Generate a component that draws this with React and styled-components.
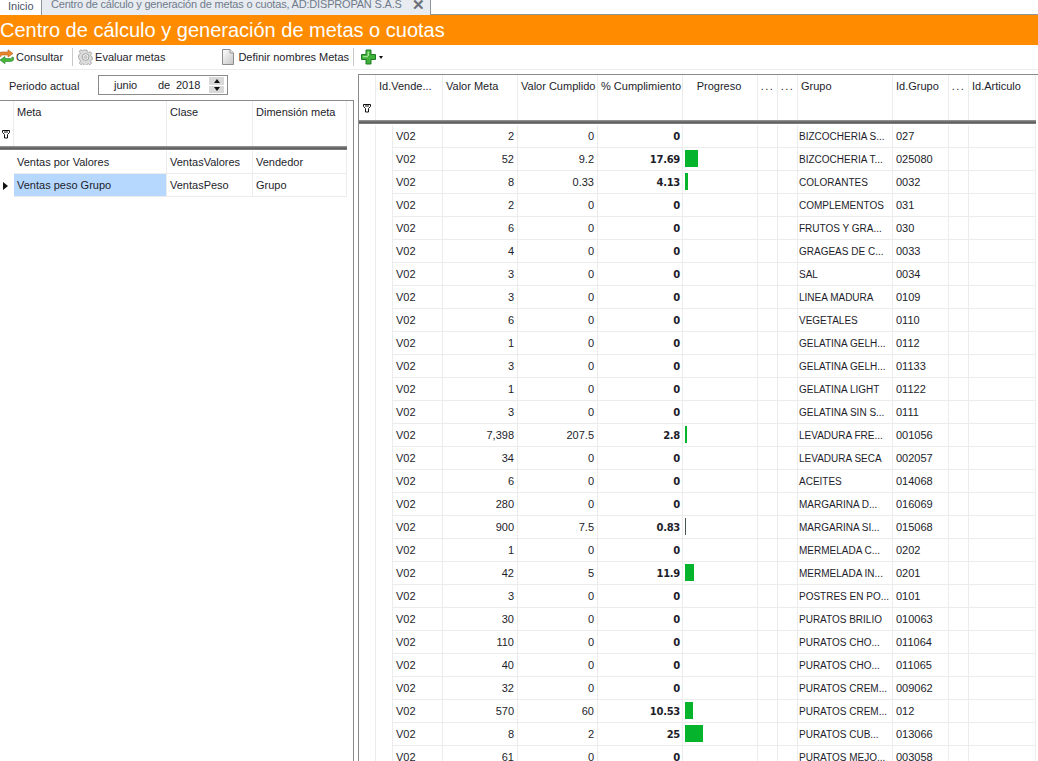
import React from "react";
import styled, { createGlobalStyle } from "styled-components";

const rows = [
	["2", "0", "0", "BIZCOCHERIA S...", "027"],
	["52", "9.2", "17.69", "BIZCOCHERIA T...", "025080"],
	["8", "0.33", "4.13", "COLORANTES", "0032"],
	["2", "0", "0", "COMPLEMENTOS", "031"],
	["6", "0", "0", "FRUTOS Y GRA...", "030"],
	["4", "0", "0", "GRAGEAS DE C...", "0033"],
	["3", "0", "0", "SAL", "0034"],
	["3", "0", "0", "LINEA MADURA", "0109"],
	["6", "0", "0", "VEGETALES", "0110"],
	["1", "0", "0", "GELATINA GELH...", "0112"],
	["3", "0", "0", "GELATINA GELH...", "01133"],
	["1", "0", "0", "GELATINA LIGHT", "01122"],
	["3", "0", "0", "GELATINA SIN S...", "0111"],
	["7,398", "207.5", "2.8", "LEVADURA FRE...", "001056"],
	["34", "0", "0", "LEVADURA SECA", "002057"],
	["6", "0", "0", "ACEITES", "014068"],
	["280", "0", "0", "MARGARINA D...", "016069"],
	["900", "7.5", "0.83", "MARGARINA SI...", "015068"],
	["1", "0", "0", "MERMELADA C...", "0202"],
	["42", "5", "11.9", "MERMELADA IN...", "0201"],
	["3", "0", "0", "POSTRES EN PO...", "0101"],
	["30", "0", "0", "PURATOS BRILIO", "010063"],
	["110", "0", "0", "PURATOS CHO...", "011064"],
	["40", "0", "0", "PURATOS CHO...", "011065"],
	["32", "0", "0", "PURATOS CREM...", "009062"],
	["570", "60", "10.53", "PURATOS CREM...", "012"],
	["8", "2", "25", "PURATOS CUB...", "013066"],
	["61", "0", "0", "PURATOS MEJO...", "003058"],
];

const metaRows = [
	{ meta: "Ventas por Valores", clase: "VentasValores", dim: "Vendedor" },
	{ meta: "Ventas peso Grupo", clase: "VentasPeso", dim: "Grupo", selected: true },
];

const goalCols = "17px 17px 50px 75px 80px 85px 75px 20px 20px 95px 56px 20px 67px";
const metaCols = "14px 153px 86px 94px";

const RefreshIcon = () => (
	<svg width="15" height="16" viewBox="0 0 15 16">
		<path d="M0 7V5.500C0 3.800 1.200 3 3 3h6V.8L14 4.500 9 8V6H3.500C2.500 6 2 6.400 2 7.500z" fill="#e8862e" stroke="#b5601a" strokeWidth=".6" />
		<path d="M14.500 8.500V10c0 1.700-1.200 2.500-3 2.500H6v2.200L1 11l5-3.500v2h5.500c1 0 1.500-.4 1.500-1.500z" fill="#45b83c" stroke="#26822a" strokeWidth=".6" />
	</svg>
);

const GearIcon = () => (
	<svg width="15" height="16" viewBox="0 0 15 16">
		<path
			d="M6 .8h3l.4 2 1.500.7 1.800-1 1.600 2-1.300 1.500.3 1.600 1.600.9v2.600l-1.600.7-.4 1.600 1.200 1.600-1.800 1.800-1.700-1-1.500.6-.4 1.900H6l-.4-1.900-1.500-.6-1.700 1-1.800-1.800 1.200-1.600-.4-1.600L-.2 9.100V6.500l1.600-.9.3-1.600L.4 2.500l1.600-2 1.800 1 1.500-.7z"
			transform="translate(.7 .3) scale(.92)"
			fill="#dcdcdc"
			stroke="#9a9a9a"
			strokeWidth=".8"
		/>
		<circle cx="7.600" cy="8" r="3.400" fill="#efefef" stroke="#a5a5a5" />
		<circle cx="7.600" cy="8" r="1.500" fill="#cfcfcf" stroke="#b0b0b0" strokeWidth=".6" />
	</svg>
);

const DocIcon = () => (
	<svg width="12" height="16" viewBox="0 0 12 16">
		<defs>
			<linearGradient id="docFill" x1="0" y1="0" x2="1" y2="1">
				<stop offset="0" stopColor="#fff" />
				<stop offset="1" stopColor="#c4c4c4" />
			</linearGradient>
		</defs>
		<path d="M.5.5h7.500l3.500 3.500v11.500H.5z" fill="url(#docFill)" stroke="#8c8c8c" />
		<path d="M8 .5V4h3.500" fill="#e8e8e8" stroke="#9c9c9c" />
	</svg>
);

const PlusIcon = () => (
	<svg width="15" height="16" viewBox="0 0 15 16">
		<path d="M5 1h5v4.500h4.500v5H10V15H5v-4.500H.5v-5H5z" fill="#3fb03a" stroke="#1f7a25" />
		<path d="M6.500 2.500h1.500v4.500H6.500zM2 7h5v1.200H2z" fill="#9fe28f" />
	</svg>
);

const FilterIcon = () => (
	<svg width="9" height="9" viewBox="0 0 9 9">
		<path d="M.5.5h7v2L5.500 4.500V8h-3V4.500L.5 2.500z" fill="#fff" stroke="#111" />
		<path d="M2 2h4" stroke="#111" />
	</svg>
);

const GlobalStyle = createGlobalStyle`
	html, body {
		margin: 0;
		height: 100%;
		background: #fff;
		overflow: hidden;
	}
	#root {
		height: 100%;
	}
`;

const Page = styled.div`
	display: flex;
	flex-direction: column;
	height: 761px;
	overflow: hidden;
	font-family: "Liberation Sans", Arial, sans-serif;
	font-size: 11px;
	color: #1d1d2b;
`;

const TabBar = styled.div`
	display: flex;
	height: 15px;
	flex: none;
	overflow: hidden;
`;

const HomeTab = styled.div`
	width: 41px;
	padding-left: 8px;
	box-sizing: border-box;
	line-height: 12px;
	color: #4a5566;
`;

const OpenTab = styled.div`
	display: flex;
	justify-content: space-between;
	width: 390px;
	box-sizing: border-box;
	padding: 0 5px 0 9px;
	background: #e8ebf0;
	border-left: 1px solid #8f959c;
	border-right: 1px solid #8f959c;
	line-height: 9px;
	letter-spacing: -0.19px;
	white-space: nowrap;
	color: #6f7b8b;
`;

const TabClose = styled.span`
	font-size: 15px;
	font-weight: bold;
	line-height: 9px;
	color: #6b7078;
`;

const TabRest = styled.div`
	flex: 1;
	border-bottom: 1px solid #8f959c;
`;

const Title = styled.div`
	flex: none;
	height: 30px;
	background: #ff8c00;
	color: #fff;
	font-size: 20px;
	line-height: 31px;
	white-space: nowrap;
`;

const Toolbar = styled.div`
	flex: none;
	display: flex;
	align-items: center;
	height: 24px;
	border-bottom: 1px solid #ececec;
`;

const ToolButton = styled.div`
	display: flex;
	align-items: center;
	gap: ${(p) => p.$gap || 3}px;
	margin-left: ${(p) => p.$left || 0}px;
	white-space: nowrap;
`;

const ToolSep = styled.div`
	width: 1px;
	height: 18px;
	background: #c9c9c9;
	margin-left: ${(p) => p.$left}px;
`;

const Caret = styled.span`
	width: 0;
	height: 0;
	border-left: 2.5px solid transparent;
	border-right: 2.5px solid transparent;
	border-top: 3px solid #111;
`;

const Content = styled.div`
	flex: 1;
	display: flex;
	min-height: 0;
`;

const LeftPane = styled.div`
	width: 354px;
	flex: none;
	display: flex;
	flex-direction: column;
`;

const PeriodRow = styled.div`
	height: 30px;
	flex: none;
	display: flex;
	align-items: center;
	padding-left: 9px;
	box-sizing: border-box;
`;

const PeriodLabel = styled.span`
	width: 89px;
	padding-top: 1px;
`;

const PeriodBox = styled.div`
	display: flex;
	align-items: center;
	width: 130px;
	height: 20px;
	box-sizing: border-box;
	border: 1px solid #8a8a8a;
	padding-left: 15px;
`;

const PeriodText = styled.span`
	width: ${(p) => p.$w}px;
`;

const Spin = styled.div`
	display: flex;
	flex-direction: column;
	gap: 1px;
	width: 15px;
	height: 16px;
	margin-left: 1px;
`;

const SpinPart = styled.div`
	flex: 1;
	display: flex;
	align-items: center;
	justify-content: center;
	background: #d9d9d9;
	&::after {
		content: "";
		border-left: 3px solid transparent;
		border-right: 3px solid transparent;
		${(p) => (p.$up ? "border-bottom: 4px solid #111;" : "border-top: 4px solid #111;")}
	}
`;

const MetaPanel = styled.div`
	flex: 1;
	border-top: 1px solid #8a8a8a;
	border-right: 1px solid #8a8a8a;
`;

const GoalPanel = styled.div`
	flex: none;
	width: 680px;
	margin: 4px 0 0 4px;
	border-top: 1px solid #8a8a8a;
	border-left: 1px solid #8a8a8a;
	overflow: hidden;
`;

const GridRow = styled.div`
	display: grid;
	grid-template-columns: ${(p) => p.$cols};
	height: ${(p) => p.$height}px;
`;

const HeadCell = styled.div`
	display: flex;
	flex-direction: column;
	justify-content: ${(p) => (p.$filter ? "flex-end" : "flex-start")};
	align-items: ${(p) => (p.$filter ? "center" : "flex-start")};
	grid-column: span ${(p) => p.$span || 1};
	box-sizing: border-box;
	padding: ${(p) => (p.$filter ? "0 0 7px" : "5px 0 0 3px")};
	border-right: 1px solid #ececec;
	white-space: nowrap;
	overflow: hidden;
	${(p) => p.$center && "align-items: center; padding-left: 0; padding-right: 2px;"}
	${(p) => p.$dots && "align-items: center; padding-left: 0; letter-spacing: 1.5px;"}
`;

const HeadBar = styled.div`
	height: 4px;
	width: ${(p) => p.$width}px;
	background: linear-gradient(#9a9a9a, #5c5c5c 60%, #8c8c8c);
	margin-bottom: 1px;
`;

const Cell = styled.div`
	box-sizing: border-box;
	padding: 0 ${(p) => (p.$bold ? 2 : 3)}px 0 ${(p) => (p.$caps ? 1 : 3)}px;
	line-height: ${(p) => (p.$bold || p.$caps ? 23 : 22)}px;
	border-right: 1px solid #ececec;
	border-bottom: ${(p) => (p.$bare ? "none" : "1px solid #ececec")};
	text-align: ${(p) => (p.$right ? "right" : "left")};
	font-family: ${(p) => (p.$bold ? '"DejaVu Sans", sans-serif' : "inherit")};
	font-size: ${(p) => (p.$bold || p.$caps ? "10px" : "inherit")};
	font-weight: ${(p) => (p.$bold ? "bold" : "normal")};
	letter-spacing: ${(p) => (p.$bold ? "-0.3px" : "normal")};
	background: ${(p) => (p.$selected ? "#b6d8ff" : "transparent")};
	white-space: nowrap;
	overflow: hidden;
`;

const Pointer = styled.div`
	display: flex;
	align-items: center;
	justify-content: center;
	padding-right: 3px;
	&::after {
		content: ${(p) => (p.$on ? '""' : "none")};
		border-top: 4.5px solid transparent;
		border-bottom: 4.5px solid transparent;
		border-left: 5px solid #111;
	}
`;

const ProgressCell = styled.div`
	padding: 2px 2px 3px;
	border-right: 1px solid #ececec;
	border-bottom: 1px solid #ececec;
	box-sizing: border-box;
`;

const ProgressBar = styled.div`
	height: 100%;
	background: ${(p) => (p.$thin ? "#47564c" : "#06b32c")};
`;

const barWidth = (pct) => {
	const n = parseFloat(pct);
	return n > 0 ? Math.max(1, Math.round(n * 0.72)) : 0;
};

export default function App() {
	return (
		<Page>
			<GlobalStyle />
			<TabBar>
				<HomeTab>Inicio</HomeTab>
				<OpenTab>
					<span>Centro de cálculo y generación de metas o cuotas, AD:DISPROPAN S.A.S</span>
					<TabClose>✕</TabClose>
				</OpenTab>
				<TabRest />
			</TabBar>
			<Title>Centro de cálculo y generación de metas o cuotas</Title>
			<Toolbar>
				<ToolButton $left={-1} $gap={2}>
					<RefreshIcon />
					Consultar
				</ToolButton>
				<ToolSep $left={9} />
				<ToolButton $left={5} $gap={2}>
					<GearIcon />
					Evaluar metas
				</ToolButton>
				<ToolButton $left={57} $gap={4}>
					<DocIcon />
					Definir nombres Metas
				</ToolButton>
				<ToolSep $left={4} />
				<ToolButton $left={7}>
					<PlusIcon />
					<Caret />
				</ToolButton>
			</Toolbar>
			<Content>
				<LeftPane>
					<PeriodRow>
						<PeriodLabel>Periodo actual</PeriodLabel>
						<PeriodBox>
							<PeriodText $w={44}>junio</PeriodText>
							<PeriodText $w={18}>de</PeriodText>
							<PeriodText $w={32}>2018</PeriodText>
							<Spin>
								<SpinPart $up />
								<SpinPart />
							</Spin>
						</PeriodBox>
					</PeriodRow>
					<MetaPanel>
						<GridRow $cols={metaCols} $height={45}>
							<HeadCell $filter>
								<FilterIcon />
							</HeadCell>
							<HeadCell>Meta</HeadCell>
							<HeadCell>Clase</HeadCell>
							<HeadCell>Dimensión meta</HeadCell>
						</GridRow>
						<HeadBar $width={347} />
						{metaRows.map((row) => (
							<GridRow $cols={metaCols} $height={23} key={row.meta}>
								<Pointer $on={row.selected} />
								<Cell $selected={row.selected}>{row.meta}</Cell>
								<Cell>{row.clase}</Cell>
								<Cell>{row.dim}</Cell>
							</GridRow>
						))}
					</MetaPanel>
				</LeftPane>
				<GoalPanel>
					<GridRow $cols={goalCols} $height={45}>
						<HeadCell $filter>
							<FilterIcon />
						</HeadCell>
						<HeadCell $span={2}>Id.Vende...</HeadCell>
						<HeadCell>Valor Meta</HeadCell>
						<HeadCell>Valor Cumplido</HeadCell>
						<HeadCell>% Cumplimiento</HeadCell>
						<HeadCell $center>Progreso</HeadCell>
						<HeadCell $dots>...</HeadCell>
						<HeadCell $dots>...</HeadCell>
						<HeadCell>Grupo</HeadCell>
						<HeadCell>Id.Grupo</HeadCell>
						<HeadCell $dots>...</HeadCell>
						<HeadCell>Id.Articulo</HeadCell>
					</GridRow>
					<HeadBar $width={677} />
					{rows.map((row, i) => {
						const width = barWidth(row[2]);
						return (
							<GridRow $cols={goalCols} $height={23} key={i}>
								<Cell $bare />
								<Cell $bare />
								<Cell>V02</Cell>
								<Cell $right>{row[0]}</Cell>
								<Cell $right>{row[1]}</Cell>
								<Cell $right $bold>{row[2]}</Cell>
								<ProgressCell>
									{width > 0 && <ProgressBar $thin={width === 1} style={{ width }} />}
								</ProgressCell>
								<Cell />
								<Cell />
								<Cell $caps>{row[3]}</Cell>
								<Cell>{row[4]}</Cell>
								<Cell />
								<Cell />
							</GridRow>
						);
					})}
				</GoalPanel>
			</Content>
		</Page>
	);
}
